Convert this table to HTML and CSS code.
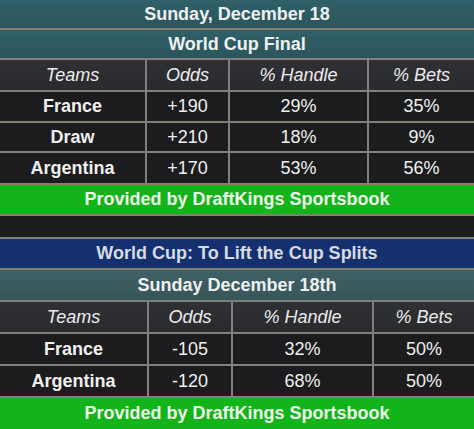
FILE: index.html
```html
<!DOCTYPE html>
<html>
<head>
<meta charset="utf-8">
<link rel="stylesheet" href="styles.css">
</head>
<body>
<div class="page">
  <div class="band teal h28">Sunday, December 18</div>
  <div class="band teal h28">World Cup Final</div>
  <div class="grid g1 head h30">
    <div class="cell">Teams</div><div class="cell">Odds</div><div class="cell">% Handle</div><div class="cell">% Bets</div>
  </div>
  <div class="grid g1 data h29">
    <div class="cell team">France</div><div class="cell">+190</div><div class="cell">29%</div><div class="cell">35%</div>
  </div>
  <div class="grid g1 data h28">
    <div class="cell team">Draw</div><div class="cell">+210</div><div class="cell">18%</div><div class="cell">9%</div>
  </div>
  <div class="grid g1 data h30">
    <div class="cell team">Argentina</div><div class="cell">+170</div><div class="cell">53%</div><div class="cell">56%</div>
  </div>
  <div class="band green h29">Provided by DraftKings Sportsbook</div>
  <div class="band dark h21"></div>
  <div class="band blue h29">World Cup: To Lift the Cup Splits</div>
  <div class="band teal2 h30">Sunday December 18th</div>
  <div class="grid g2 head h30">
    <div class="cell">Teams</div><div class="cell">Odds</div><div class="cell">% Handle</div><div class="cell">% Bets</div>
  </div>
  <div class="grid g2 data h30">
    <div class="cell team">France</div><div class="cell">-105</div><div class="cell">32%</div><div class="cell">50%</div>
  </div>
  <div class="grid g2 data h30">
    <div class="cell team">Argentina</div><div class="cell">-120</div><div class="cell">68%</div><div class="cell">50%</div>
  </div>
  <div class="band green last h31">Provided by DraftKings Sportsbook</div>
</div>
</body>
</html>
```

FILE: styles.css
```css
html, body {
  margin: 0;
  padding: 0;
  background: #1c1c1e;
}
.page {
  width: 474px;
  height: 429px;
  overflow: hidden;
  font-family: "Liberation Sans", Arial, sans-serif;
  font-size: 18px;
  color: #f2f2f2;
  background: #7d7d76;
  display: flex;
  flex-direction: column;
}
.band {
  display: flex;
  align-items: center;
  justify-content: center;
  font-weight: bold;
  border-bottom: 2px solid #807f78;
  flex: none;
}
.band.last { border-bottom: none; }
.teal {
  background: linear-gradient(#30606a, #2c555c);
  color: #eef0f0;
}
.teal2 {
  background: linear-gradient(#3e6064, #37565a);
  color: #eef0f0;
}
.green {
  background: #12b41a;
  color: #eef6ea;
}
.dark { background: #1c1c1e; }
.blue {
  background: #14306e;
  color: #d6dbe4;
}
.grid {
  display: grid;
  column-gap: 2px;
  background: #807f78;
  border-bottom: 2px solid #807f78;
  flex: none;
}
.g1 { grid-template-columns: 145px 81px 137px 1fr; }
.g2 { grid-template-columns: 147px 82px 139px 1fr; }
.cell {
  display: flex;
  align-items: center;
  justify-content: center;
}
.head .cell {
  background: linear-gradient(#2f3033, #2a2b2e);
  font-style: italic;
  color: #ececec;
}
.data .cell {
  background: #1c1c1e;
  color: #f0f0f0;
}
.data .team { font-weight: bold; }
.h21 { height: 21px; }
.h28 { height: 28px; }
.h29 { height: 29px; }
.h30 { height: 30px; }
.h31 { height: 31px; }
```
